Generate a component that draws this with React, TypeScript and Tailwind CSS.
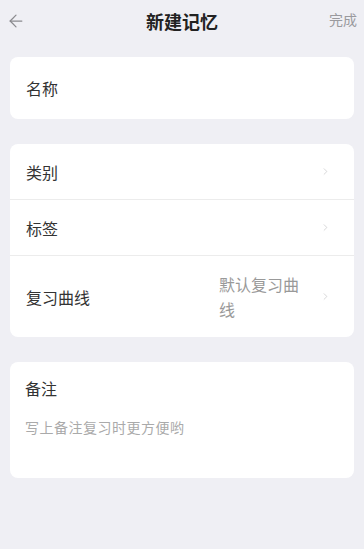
import { ArrowLeft, ChevronRight } from "lucide-react";

const font = { fontFamily: '"Noto Sans CJK SC", "Noto Sans", sans-serif' };

function Row({ label, value, last }: { label: string; value?: string; last?: boolean }) {
  return (
    <div
      className={`flex items-center pl-4 pr-[23px] ${value ? "h-[81px]" : "h-[56px]"} ${
        last ? "" : "border-b border-[#ececec]"
      }`}
    >
      <span className="flex-1 text-[16px] text-[#333]">{label}</span>
      {value && (
        <span className="w-[86px] mr-[15px] text-[16px] leading-[25px] text-[#999]">{value}</span>
      )}
      <ChevronRight size={11} strokeWidth={1.5} className="text-[#c4c4c8]" />
    </div>
  );
}

export default function App() {
  return (
    <div className="min-h-[549px] w-[364px] bg-[#efeff4]" style={font}>
      {/* Header */}
      <div className="relative flex h-[42px] items-center justify-center">
        <ArrowLeft size={20} strokeWidth={1.5} className="absolute left-[6px] top-[11px] text-[#8a8a8e]" />
        <span className="text-[18px] font-semibold text-[#222]">新建记忆</span>
        <span className="absolute right-[7px] top-[9px] text-[14px] text-[#9a9a9e]">完成</span>
      </div>

      <div className="mx-[10px] mt-[15px] flex h-[62px] items-center rounded-lg bg-white px-4">
        <span className="text-[16px] text-[#333]">名称</span>
      </div>

      <div className="mx-[10px] mt-[25px] overflow-hidden rounded-lg bg-white">
        <Row label="类别" />
        <Row label="标签" />
        <Row label="复习曲线" value="默认复习曲线" last />
      </div>

      <div className="mx-[10px] mt-[25px] h-[116px] rounded-lg bg-white px-[15px] pt-[14px]">
        <div className="text-[16px] text-[#333]">备注</div>
        <div className="mt-[17px] text-[14px] tracking-[0.5px] text-[#aaa]">写上备注复习时更方便哟</div>
      </div>
    </div>
  );
}
